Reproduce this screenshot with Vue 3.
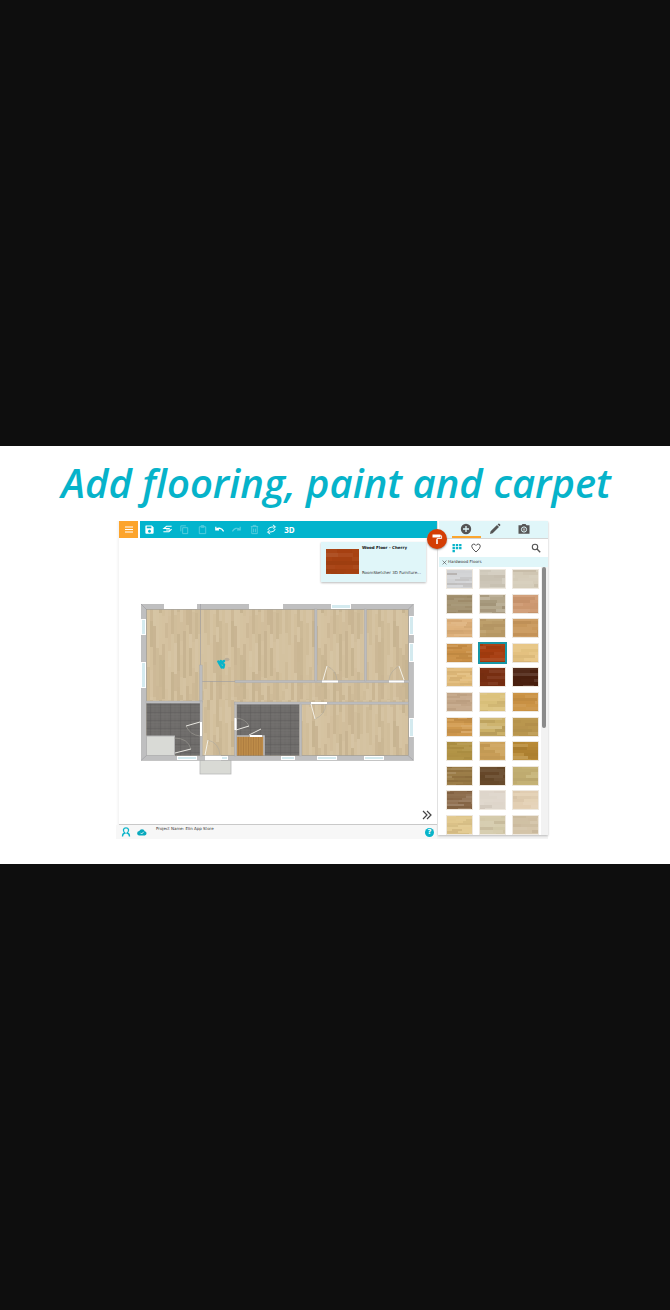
<script setup>
import { ref } from 'vue'

const tools = [
  { id: 'save', label: 'Save' },
  { id: 'walls', label: 'Draw walls' },
  { id: 'copy', label: 'Copy', dim: true },
  { id: 'paste', label: 'Paste', dim: true },
  { id: 'undo', label: 'Undo' },
  { id: 'redo', label: 'Redo', dim: true },
  { id: 'trash', label: 'Delete', dim: true },
  { id: 'swap', label: 'Replace' },
  { id: 'three', label: '3D' }
]

function seeded(seed) {
  let s = seed * 7919 + 13
  return () => {
    s = (s * 16807) % 2147483647
    return s / 2147483647
  }
}

function planks(seed, w, h, row, min, max, strength) {
  const rnd = seeded(seed)
  const out = []
  for (let y = 0; y < h; y += row) {
    let x = -Math.floor(rnd() * min)
    while (x < w) {
      const len = min + Math.floor(rnd() * (max - min))
      const t = rnd() - 0.5
      out.push({ x, y, w: len, h: row, fill: t > 0 ? '#fff' : '#3a1c00', o: Math.abs(t) * strength })
      x += len
    }
  }
  return out
}

const colours = [
  '#cfd0d2', '#d3cdbf', '#d5ccb9',
  '#a2916f', '#b3a68b', '#cf9a72',
  '#dfb27c', '#bea06c', '#cb9a5e',
  '#cb9147', '#a63c0f', '#e7c583',
  '#e3bd7c', '#7a2f12', '#4a200f',
  '#c6a98b', '#dcc27c', '#cc9445',
  '#d39c50', '#cbb067', '#bd9a51',
  '#b29446', '#cda25a', '#b98a35',
  '#9c7d48', '#67492a', '#c6b376',
  '#8d6c4c', '#ded5ca', '#e4d1b5',
  '#e2c98f', '#d5cbac', '#d4c4a8'
]
const strong = [0, 4, 18, 19, 23, 24, 27, 14]
const floors = colours.map((colour, i) => ({
  colour,
  id: i,
  planks: planks(i + 3, 27, 20, i % 3 === 0 ? 2 : 3, 9, 27, strong.includes(i) ? 0.34 : 0.17)
}))
const selected = ref(10)
const thumb = planks(31, 33, 25, 4, 9, 22, 0.18)
const parquet = planks(12, 100, 80, 3, 14, 40, 0.15)

const windows = [
  [164, 604, 33, 5, 1], [249, 604, 34, 5, 1], [331, 604, 20, 5], [141, 619, 5, 16], [141, 662, 5, 26],
  [409, 616, 5, 19], [409, 643, 5, 19], [409, 718, 5, 19],
  [177, 756, 20, 4], [221, 756, 7, 4], [281, 756, 14, 4], [317, 756, 20, 4], [364, 756, 20, 4]
]
const walls = [
  [199.5, 665, 2.8, 37], [146, 701, 56, 2.2], [200, 701, 2.4, 55], [234.5, 702, 2.2, 54],
  [234.5, 702, 174, 2.3], [299.5, 704, 2.3, 52], [235, 680.3, 174, 2.4],
  [314.6, 609, 2.4, 72], [364.4, 609, 2.2, 72]
]
const doors = [
  'M200 722L186 726', 'M175 753L191 749', 'M205 755L208 740', 'M236 730L249 726',
  'M249 735L261 729', 'M323 680L327 666', 'M404 680L399 666', 'M311 704L315 719'
]
const arcs = [
  'M186 726Q190 735 200 736', 'M174 738Q188 738 191 749', 'M208 740Q219 743 220 755', 'M236 718Q246 719 249 726',
  'M327 666Q336 670 337 680', 'M399 666Q390 671 389 680', 'M315 719Q325 715 326 704'
]
</script>

<template>
  <main class="viewer">
    <section class="slide">
      <h1>Add flooring, paint and carpet</h1>
      <div class="app">
        <div class="main">
          <header class="topbar">
            <button class="menu" aria-label="Menu">
              <svg viewBox="0 0 18 17"><path d="M5 6h8M5 8.500h8M5 11h8" stroke="#fff" stroke-width="1" /></svg>
            </button>
            <nav class="tools">
              <button v-for="t in tools" :key="t.id" :aria-label="t.label" :class="{ dim: t.dim }">
                <template v-if="t.id === 'three'">3D</template>
                <svg v-else viewBox="0 0 12 12" fill="none" stroke="#fff">
                  <path v-if="t.id === 'save'" fill="#fff" stroke="none" fill-rule="evenodd" d="M2 1.500h6.500l2 2V9.500q0 1-1 1h-7q-1 0-1-1v-7q0-1 .5-1zM3 2.700v2h5v-2zM6 6.300a1.600 1.600 0 1 0 .01 0z" />
                  <path v-else-if="t.id === 'walls'" stroke-width="1.100" d="M10.500 2.500H5L2 5h6.500M10.500 5.500L7.500 8.500H1.500M4.500 6.500h5" />
                  <path v-else-if="t.id === 'copy'" d="M2 8V2h5.500M4 4h5.500v6.500H4z" />
                  <path v-else-if="t.id === 'paste'" d="M2.500 3h7v7.500h-7zM4.500 3V1.800h3V3.500h-3" />
                  <path v-else-if="t.id === 'undo'" stroke-width="1.400" d="M2 3v3.500h3.500M2.300 6Q7 2.500 10.500 8" />
                  <path v-else-if="t.id === 'redo'" stroke-width="1.300" d="M10 3v3.500H6.500M9.700 6Q5 2.500 1.500 8" />
                  <path v-else-if="t.id === 'trash'" d="M2 2.800h8M4.500 2.500v-1h3v1M3 3v7.500h6V3M5 5v4M7 5v4" />
                  <path v-else stroke-width="1" d="M2 6.500Q2.500 4 5.500 3.500L10 3M7.500 1L10.300 3 8 5.500M10 5.500Q9.500 8 6.500 8.500L2 9M4 6.500L1.700 9 4.500 11" />
                </svg>
              </button>
            </nav>
          </header>

          <div class="canvas">
            <svg class="plan" viewBox="140 603 274 172" role="img" aria-label="Floor plan">
              <defs>
                <pattern id="wood" width="81" height="100" patternUnits="userSpaceOnUse">
                  <rect width="81" height="100" fill="#d3c09d" />
                  <rect v-for="(p, i) in parquet" :key="i" :x="p.y" :y="p.x" :width="p.h" :height="p.w" :fill="p.fill" :opacity="p.o" />
                </pattern>
                <pattern id="tile" width="10" height="8" patternUnits="userSpaceOnUse">
                  <rect width="10" height="8" fill="#6d6b69" />
                  <path d="M0 2.500h10M0 5h10M3 0v8M7 0v8" stroke="#777573" stroke-width=".4" />
                  <path d="M0 0h10M0 0v8" stroke="#5c5b59" stroke-width=".8" />
                </pattern>
                <pattern id="deck" width="5" height="20" patternUnits="userSpaceOnUse">
                  <rect width="5" height="20" fill="#bd8b48" />
                  <path d="M1 0v20M3.500 0v20" stroke="#a4743a" stroke-width=".6" />
                </pattern>
              </defs>
              <rect x="200" y="760" width="31" height="14" fill="#d9dad5" stroke="#b8b8b8" stroke-width=".8" />
              <rect x="141.300" y="604.300" width="272.200" height="156.200" fill="#bfbfc0" stroke="#aaa" stroke-width=".5" />
              <rect x="146.500" y="609.500" width="262" height="146" fill="url(#wood)" stroke="#9c9890" stroke-width=".6" />
              <rect x="146.500" y="703" width="54" height="52.500" fill="url(#tile)" />
              <rect x="236.500" y="704" width="63" height="51.500" fill="url(#tile)" />
              <rect x="146.500" y="736" width="28" height="19.500" fill="#d9dad6" stroke="#b4b4b4" />
              <rect x="237" y="736" width="27" height="19.500" fill="url(#deck)" />
              <path d="M236.500 736H264V755.500" fill="none" stroke="#bcbcbe" stroke-width="1.600" />
              <path d="M200.500 604V665M202 681.500H235M141 604l5.500 5.500M413.500 604l-5.500 5.500M141 760.500l5.500-5M413.500 760.500l-5.500-5" stroke="#9b9ba0" stroke-width=".6" />
              <rect v-for="(w, i) in walls" :key="'w' + i" :x="w[0]" :y="w[1]" :width="w[2]" :height="w[3]" fill="#bcbcbe" stroke="#a3a3a3" stroke-width=".3" />
              <g v-for="(w, i) in windows" :key="'n' + i">
                <rect :x="w[0]" :y="w[1]" :width="w[2]" :height="w[3]" fill="#fff" />
                <rect v-if="!w[4]" :x="w[0] + 1" :y="w[1] + 1" :width="w[2] - 2" :height="w[3] - 2" fill="#d4eaef" />
              </g>
              <path d="M201 722V736M235.500 718V730M322 681.500h16M389 681.500h15M311 703h16M250 736h12" stroke="#fff" stroke-width="2" />
              <path d="M205 758h16" stroke="#fff" stroke-width="4.500" />
              <path v-for="d in arcs" :key="d" :d="d" fill="none" stroke="#a9a69e" stroke-width=".5" />
              <path v-for="d in doors" :key="d" :d="d" fill="none" stroke="#f7f6ef" stroke-width=".9" />
              <ellipse cx="227" cy="659.500" rx="2.500" ry="1.700" fill="#b9ad98" />
              <path d="M218.300 661.500l3.400 6M220.800 661l1.600 2.500M224 661l-1.600 1.200M224 664.500l-.6 3" stroke="#08b4c9" stroke-width="2.500" stroke-linecap="round" />
            </svg>

            <article class="product">
              <svg class="thumb" viewBox="0 0 33 25" preserveAspectRatio="none">
                <rect width="33" height="25" fill="#a84212" />
                <rect v-for="(p, i) in thumb" :key="i" :x="p.x" :y="p.y" :width="p.w" :height="p.h" :fill="p.fill" :opacity="p.o" />
              </svg>
              <div class="info">
                <strong>Wood Floor - Cherry</strong>
                <span>RoomSketcher 3D Furniture...</span>
              </div>
            </article>
            <button class="expand" aria-label="Expand">
              <svg viewBox="0 0 10 10"><path d="M1 1l4 4-4 4M5 1l4 4-4 4" fill="none" stroke="#444" stroke-width="1.200" /></svg>
            </button>
          </div>

          <footer class="status">
            <button aria-label="Account"><svg viewBox="0 0 10 10"><path d="M1.500 9.500Q1.500 6.500 3.800 6Q2 4.500 2.500 2.500Q3 .8 5 .8T7.500 2.500Q8 4.500 6.200 6Q8.500 6.500 8.500 9.500" fill="none" stroke="#08b4c9" stroke-width="1.300" /></svg></button>
            <button aria-label="Saved to cloud"><svg viewBox="0 0 10 10"><path d="M2.500 8.500A2.200 2.200 0 0 1 2.200 4.100 3 3 0 0 1 7.800 4.200 2.200 2.200 0 0 1 7.800 8.500z" fill="#08a9bd" /><path d="M3.500 5.800l1.200 1.200 2-2.200" fill="none" stroke="#fff" stroke-width=".8" /></svg></button>
            <p>Project Name: Elin App Store</p>
            <button class="help" aria-label="Help">?</button>
          </footer>
        </div>

        <button class="paint" aria-label="Paint">
          <svg viewBox="0 0 20 20"><path d="M5.500 5.500h8v3h-8z" fill="#fff" /><path d="M13 6.800h1.600v2.700H10V11" fill="none" stroke="#fff" stroke-width=".9" /><path d="M9.200 10.500h1.600V15H9.200z" fill="#fff" /></svg>
        </button>

        <aside class="side">
          <nav class="tabs">
            <button class="active" aria-label="Add"><svg viewBox="0 0 12 12"><circle cx="6" cy="6" r="5.200" fill="#555" /><path d="M6 3v6M3 6h6" stroke="#e0f6f9" stroke-width="1.300" /></svg></button>
            <button aria-label="Edit"><svg viewBox="0 0 12 12"><path d="M1 11l.6-2.800L8 2l2 2-6.300 6.300zM8.600 1.400l.8-.7q.5-.3 1 .1l.8.800q.4.500 0 1l-.7.700z" fill="#555" /></svg></button>
            <button aria-label="Camera"><svg viewBox="0 0 12 12"><path d="M.5 2.200h3L4.500 1h3l1 1.200h3v8.600H.5z" fill="#555" /><circle cx="6" cy="6.500" r="2.600" fill="none" stroke="#e0f6f9" /><circle cx="6" cy="6.500" r="1.200" fill="#aaa" /></svg></button>
          </nav>
          <div class="filters">
            <button aria-label="Categories"><svg viewBox="0 0 10 10"><path d="M.5 1h2.400v2.200H.5zM3.800 1h2.400v2.200H3.800zM7.100 1h2.400v2.200H7.100zM.5 4h2.400v2.200H.5zM3.800 4h2.400v2.200H3.800zM7.100 4h2.400v2.200H7.100zM.5 7h2.400v2.200H.5z" fill="#08b4c9" /></svg></button>
            <button aria-label="Favourites"><svg viewBox="0 0 10 10"><path d="M5 9Q.7 5.500.7 3.300.8 1.200 2.700 1.100 4.200 1.100 5 2.500 5.800 1.100 7.300 1.100 9.200 1.200 9.300 3.300 9.300 5.500 5 9z" fill="none" stroke="#555" /></svg></button>
            <button class="search" aria-label="Search"><svg viewBox="0 0 10 10"><circle cx="4" cy="4" r="2.700" fill="none" stroke="#555" stroke-width="1.100" /><path d="M6 6l3.200 3.200" stroke="#555" stroke-width="1.400" /></svg></button>
          </div>
          <div class="category">
            <button aria-label="Close category"><svg viewBox="0 0 6 6"><path d="M.7.700l4.600 4.600M5.300.700L.7 5.300" stroke="#444" stroke-width=".7" /></svg></button>
            <span>Hardwood Floors</span>
          </div>
          <div class="list">
            <div class="swatches">
              <button v-for="f in floors" :key="f.id" :class="{ selected: selected === f.id }" :aria-label="'Floor ' + (f.id + 1)" @click="selected = f.id">
                <svg viewBox="0 0 27 20" preserveAspectRatio="none">
                  <rect width="27" height="20" :fill="f.colour" />
                  <rect v-for="(p, i) in f.planks" :key="i" :x="p.x" :y="p.y" :width="p.w" :height="p.h" :fill="p.fill" :opacity="p.o" />
                </svg>
              </button>
            </div>
            <div class="track"><div class="handle"></div></div>
          </div>
        </aside>
      </div>
    </section>
  </main>
</template>

<style>
body {
  background: #0e0e0e;
}
</style>

<style scoped>
* {
  box-sizing: border-box;
}
.viewer {
  min-height: 100vh;
  display: flex;
  flex-direction: column;
  justify-content: center;
  background: #0e0e0e;
  font-family: "DejaVu Sans", sans-serif;
  color: #333;
}
button {
  display: flex;
  align-items: center;
  justify-content: center;
  padding: 0;
  border: 0;
  background: none;
  font: inherit;
  color: inherit;
  cursor: pointer;
}
svg {
  display: block;
}
.slide {
  background: #fff;
  padding: 0 122px 25px 116px;
}
h1 {
  margin: 0 -100px;
  height: 75px;
  padding-left: 8px;
  line-height: 74px;
  text-align: center;
  white-space: nowrap;
  font-family: "Open Sans", sans-serif;
  font-style: italic;
  font-weight: 600;
  font-size: 40px;
  color: #06b3ca;
}
.app {
  position: relative;
  display: grid;
  grid-template-columns: minmax(0, 1fr) 110px;
  column-gap: 1px;
  background: linear-gradient(to right, #fff, #f3f3f3 3px);
}
.main {
  display: flex;
  flex-direction: column;
}
.topbar {
  display: flex;
  gap: 2px;
  height: 17px;
  margin-left: 3px;
  background: #fff;
}
.menu {
  width: 19px;
  background: #fca42c;
}
.menu svg {
  width: 18px;
  height: 17px;
}
.tools {
  flex: 1;
  display: flex;
  padding-left: 1px;
  background: #02b4cd;
}
.tools button {
  width: 5.9%;
  font-family: "Noto Sans", sans-serif;
  font-size: 8px;
  font-weight: 700;
  color: #fff;
}
.tools svg {
  width: 11px;
  height: 11px;
}
.tools .dim {
  opacity: 0.35;
}
.canvas {
  position: relative;
  margin-left: 3px;
  padding: 65px 23px 49px 21px;
  background: #fff;
  border-bottom: 1px solid #c9c9c9;
}
.plan {
  width: 100%;
}
.product {
  position: absolute;
  top: 4px;
  right: 11px;
  width: 105px;
  height: 40px;
  display: flex;
  gap: 3px;
  padding: 7px 5px;
  background: #e0f6f9;
  box-shadow: 0 1px 2px #bbb;
}
.thumb {
  width: 33px;
  height: 25px;
  flex: none;
}
.info {
  display: flex;
  flex-direction: column;
  justify-content: space-between;
  margin: -4px 0 -1px;
  font-size: 4px;
  line-height: 6px;
  white-space: nowrap;
  color: #333;
}
.info strong {
  color: #111;
}
.expand {
  position: absolute;
  right: 5px;
  bottom: 4px;
}
.expand svg {
  width: 10px;
  height: 10px;
}
.status {
  display: flex;
  align-items: center;
  gap: 6px;
  height: 14px;
  padding: 0 3px 0 5px;
  background: #f7f7f7;
}
.status svg {
  width: 10px;
  height: 10px;
}
.status p {
  flex: 1;
  align-self: flex-start;
  margin: 0 0 0 3px;
  font-size: 4px;
  line-height: 8px;
}
.help {
  width: 9px;
  height: 9px;
  border-radius: 50%;
  background: #08b4c9;
  color: #fff;
  font-size: 7px;
  font-weight: 700;
  line-height: 9px;
}
.paint {
  position: absolute;
  top: 8px;
  right: 101px;
  width: 20px;
  height: 20px;
  border-radius: 50%;
  background: #d43e05;
  box-shadow: 0 1px 2px #999;
  z-index: 1;
}
.paint svg {
  width: 20px;
  height: 20px;
}
.side {
  display: flex;
  flex-direction: column;
  margin-bottom: 4px;
  padding-left: 1px;
  background: #fff;
  box-shadow: 0 1px 2px #bbb;
}
.tabs {
  display: flex;
  height: 17px;
  padding: 0 10px 0 13px;
  background: #e0f6f9;
}
.tabs button {
  flex: 1;
  border-bottom: 2px solid transparent;
}
.tabs .active {
  border-color: #fba62f;
}
.tabs svg {
  width: 12px;
  height: 12px;
}
.filters {
  display: flex;
  align-items: center;
  gap: 9px;
  height: 19px;
  padding: 0 7px 0 13px;
  border-top: 1px solid #d5d5d5;
}
.filters svg {
  width: 10px;
  height: 10px;
}
.search {
  margin-left: auto;
}
.category {
  display: flex;
  align-items: center;
  gap: 1px;
  height: 10px;
  padding-left: 3px;
  background: #e0f6f9;
  font-size: 4px;
  line-height: 10px;
}
.category svg {
  width: 5px;
  height: 5px;
}
.list {
  flex: 1;
  display: flex;
  justify-content: space-between;
}
.swatches {
  flex: 1;
  display: grid;
  grid-template-columns: repeat(3, 1fr);
  grid-auto-rows: 20px;
  align-content: space-between;
  column-gap: 6px;
  padding: 2px 2px 0 7px;
}
.swatches button {
  outline: 1px solid #eee8df;
  outline-offset: -1px;
}
.swatches .selected {
  outline: 2px solid #1796a5;
}
.swatches svg {
  width: 100%;
  height: 20px;
}
.track {
  width: 7px;
  padding: 0 1px;
  background: #f2f2f2;
}
.handle {
  width: 4px;
  height: 60%;
  border-radius: 2px;
  background: #8b8b8b;
}
</style>
